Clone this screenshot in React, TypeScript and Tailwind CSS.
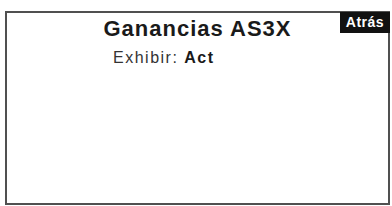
export default function App() {
	return (
		<div className="w-[392px] h-[206px] bg-white pt-[11px] pl-[5px] pr-[2px] pb-[1px] font-['Liberation_Sans',Arial,sans-serif] text-[#1a1a1a]">
			<div className="relative w-full h-full border-2 border-[#505050]">
				<div className="absolute top-[-1px] right-[-2px] h-[21px] w-[50px] bg-[#111] text-white text-[14px] font-bold leading-[21px] text-center tracking-[0.5px]">
					Atrás
				</div>
				<div className="flex flex-col pt-[3px]">
					<h1 className="text-center text-[22px] font-bold leading-[26px] tracking-[1px]">
						Ganancias AS3X
					</h1>
					<p className="pl-[106px] mt-[7px] text-[16px] leading-[18px] tracking-[1.5px] text-[#333]">
						Exhibir: <span className="font-bold text-[#1a1a1a]">Act</span>
					</p>
				</div>
			</div>
		</div>
	);
}
